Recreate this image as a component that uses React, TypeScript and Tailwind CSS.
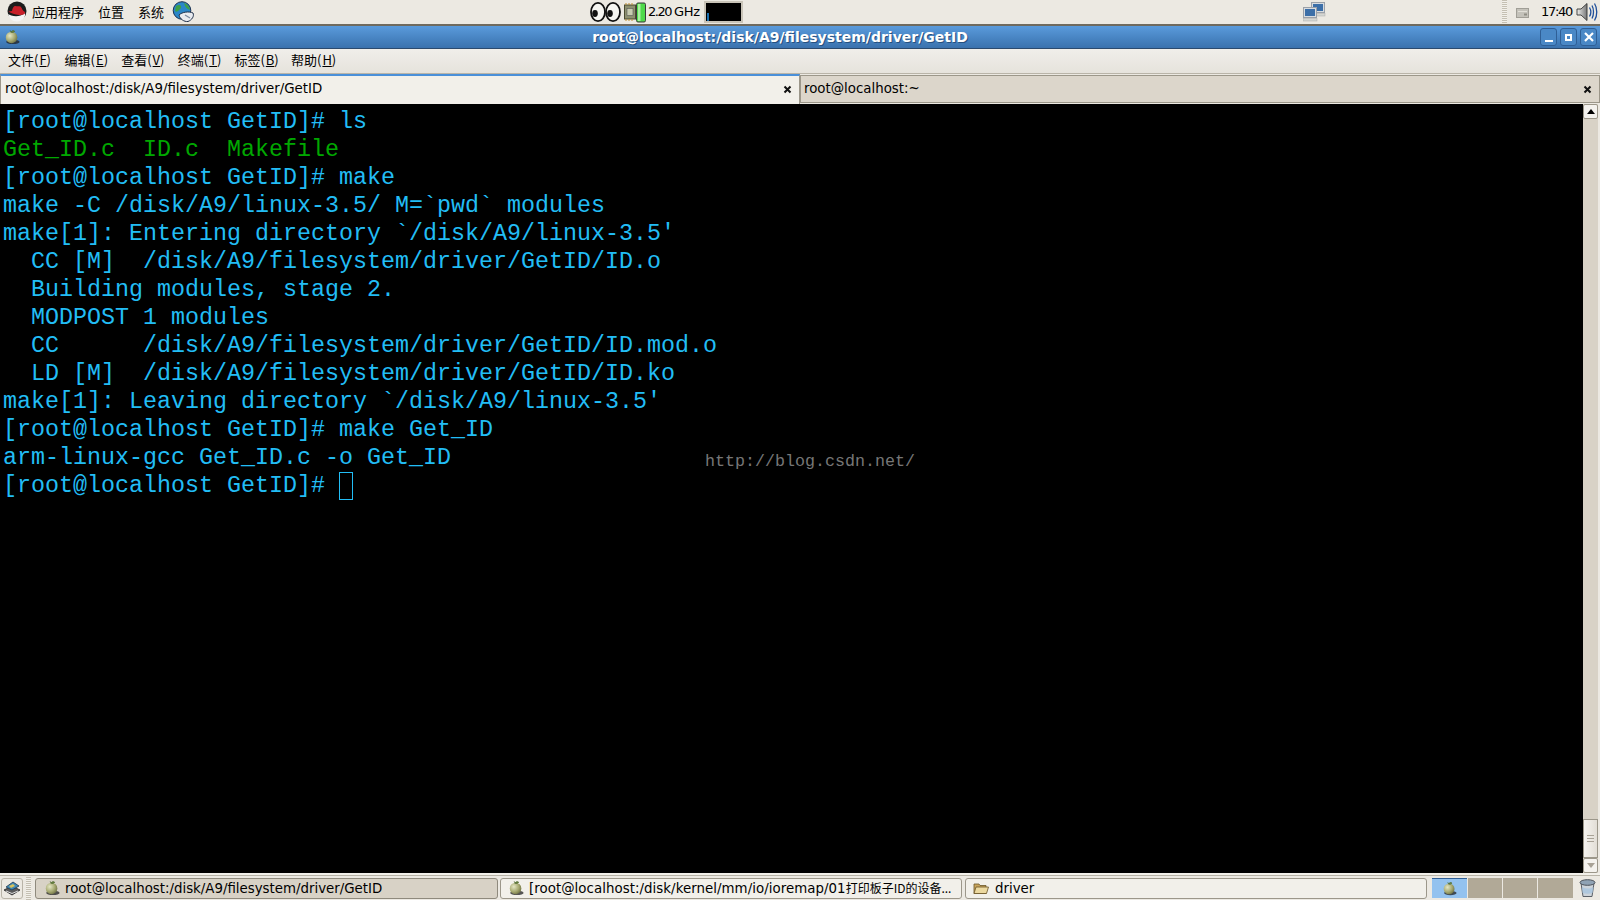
import React from "react";

const UI = '"DejaVu Sans","Noto Sans CJK SC",sans-serif';
const CJK = '"Noto Sans CJK SC","DejaVu Sans",sans-serif';

function Apple({ size = 18 }: { size?: number }) {
  return (
    <svg width={size} height={size} viewBox="0 0 18 18" className="shrink-0">
      <defs>
        <radialGradient id="ap" cx="0.35" cy="0.35" r="0.8">
          <stop offset="0" stopColor="#e4e6c4" />
          <stop offset="0.55" stopColor="#a5a870" />
          <stop offset="1" stopColor="#5f6238" />
        </radialGradient>
      </defs>
      <ellipse cx="10" cy="14.5" rx="7.5" ry="2.5" fill="#222" opacity="0.75" />
      <circle cx="8.5" cy="9.5" r="6.5" fill="url(#ap)" />
      <path d="M8 4 L7 1.5 M8 3.5 C9 1.5 11 1.5 12 2.5 C11 4 9.5 4 8 3.5" stroke="#4f6a30" strokeWidth="0.9" fill="#6f8a46" />
    </svg>
  );
}

function RedHat() {
  return (
    <svg width="20" height="22" viewBox="0 0 20 22">
      <circle cx="10" cy="10" r="9.5" fill="#1c1c1c" />
      <path d="M1 13 C4 15 12 17 18 12 C19 16 15 20.5 10 20.5 C5 20.5 2 17 1 13 Z" fill="#f4f4f4" />
      <path d="M1.5 10.5 L5 10 C5.5 7 6.5 5 8.5 5 C10 5.5 12 5 13.5 5.5 C15 7 15.5 10 18 11 C18.5 13 16 14.5 12 14 C8 13.5 4 12.5 1.5 10.5 Z" fill="#c8202a" />
    </svg>
  );
}

function GlobeMouse() {
  return (
    <svg width="23" height="22" viewBox="0 0 23 22">
      <circle cx="10" cy="9.5" r="8.8" fill="#2a86c8" stroke="#1a3050" strokeWidth="1" />
      <path d="M4 5 C7 3 10 4 9 7 C7 9 5 12 3 10 Z M12 2 C15 3 18 6 18 9 C15 8 13 6 12 2 Z" fill="#3fa048" />
      <path d="M7 14 C10 11 17 10 21 12 C22.5 15 20 19 16 20.5 C12 21 8 18 7 14 Z" fill="#e8ebf0" stroke="#20304a" strokeWidth="1" />
      <path d="M13 14 L18 17" stroke="#7a8aa0" strokeWidth="1.2" />
    </svg>
  );
}

function Eye() {
  return (
    <svg width="16" height="22" viewBox="0 0 16 22" className="-mr-px">
      <ellipse cx="8" cy="11" rx="7" ry="9.2" fill="#f6f6f2" stroke="#111" strokeWidth="1.8" />
      <ellipse cx="5" cy="12.5" rx="2.8" ry="3.4" fill="#111" />
    </svg>
  );
}

function Chip() {
  return (
    <svg width="12" height="22" viewBox="0 0 12 22">
      <rect x="0.5" y="4" width="11" height="14" fill="#8d9070" stroke="#4a4a30" />
      <rect x="3" y="7.5" width="6" height="7" fill="#c8ccb0" stroke="#555" strokeWidth="0.6" />
      <path d="M2 2v2M5 2v2M8 2v2M2 18v2M5 18v2M8 18v2" stroke="#c09030" strokeWidth="1" />
    </svg>
  );
}

function Battery() {
  return (
    <svg width="10" height="22" viewBox="0 0 10 22">
      <rect x="0.5" y="2" width="9" height="19" rx="1.5" fill="#4fd94a" stroke="#3a3a3a" />
      <rect x="2" y="3" width="2.5" height="17" fill="#a8f0a0" />
    </svg>
  );
}

function Network() {
  const Mon = ({ x, y }: { x: number; y: number }) => (
    <g transform={`translate(${x} ${y})`}>
      <rect x="0.5" y="0.5" width="13" height="10" fill="#d8dce0" stroke="#9aa0a8" />
      <rect x="2" y="2" width="10" height="7" fill="#3c6fa8" />
      <rect x="0" y="11.5" width="14" height="2.5" fill="#d4d6d2" stroke="#aaa" strokeWidth="0.5" />
    </g>
  );
  return (
    <svg width="23" height="21" viewBox="0 0 23 21">
      <Mon x={8} y={1} />
      <Mon x={0} y={6} />
    </svg>
  );
}

function Tray() {
  return (
    <svg width="13" height="11" viewBox="0 0 13 11">
      <rect x="0.5" y="1.5" width="12" height="9" fill="#c4c2ba" stroke="#a09e96" />
      <rect x="2" y="4" width="9" height="1" fill="#e2e0d8" />
      <rect x="8" y="6.5" width="3" height="2" fill="#8f8d84" />
    </svg>
  );
}

function Speaker() {
  return (
    <svg width="22" height="20" viewBox="0 0 22 20">
      <defs>
        <linearGradient id="sp" x1="0" x2="1">
          <stop offset="0" stopColor="#f0f0ee" />
          <stop offset="1" stopColor="#777" />
        </linearGradient>
      </defs>
      <path d="M1 7 H5 L11 1.5 V18.5 L5 13 H1 Z" fill="url(#sp)" stroke="#333" strokeWidth="0.9" />
      <path d="M13.5 5.5 C15 8 15 12 13.5 14.5 M16 3.5 C18 7 18 13 16 16.5 M18.5 1.5 C21.5 6 21.5 14 18.5 18.5" fill="none" stroke="#1f4f9a" strokeWidth="1.3" />
    </svg>
  );
}

function Folder() {
  return (
    <svg width="16" height="14" viewBox="0 0 16 14" className="shrink-0">
      <path d="M1 3 H6 L7 4.5 H13 V12.5 H1 Z" fill="#c9a55c" stroke="#6a5427" strokeWidth="0.8" />
      <path d="M3 6 H15.5 L13.5 12.5 H1 Z" fill="#ecd9a0" stroke="#6a5427" strokeWidth="0.8" />
    </svg>
  );
}

function ShowDesktop() {
  return (
    <svg width="18" height="16" viewBox="0 0 18 16">
      <path d="M1 10 L9 6 L17 10 L9 15 Z" fill="#5a5a5a" stroke="#222" strokeWidth="0.8" />
      <path d="M3 7 L10 2 L16 6 L9 10 Z" fill="#3f89b8" stroke="#20384f" strokeWidth="0.8" />
      <path d="M6 6 L10 4 L12 6 L8 8 Z" fill="#d8c35c" />
      <path d="M3 11 L9 13.5 L15 11" stroke="#eee" strokeWidth="0.9" fill="none" />
    </svg>
  );
}

function Trash() {
  return (
    <svg width="17" height="20" viewBox="0 0 17 20">
      <path d="M2 5 L4 18.5 H13 L15 5 Z" fill="#cdd4da" stroke="#5a6068" />
      <ellipse cx="8.5" cy="4.5" rx="7.5" ry="2.8" fill="#8fa2b4" stroke="#4a5058" />
      <path d="M3 9 C7 11 11 11 14.5 9 L13.5 15 C10 16 7 16 3.5 15 Z" fill="#a7c4de" opacity="0.8" />
    </svg>
  );
}

function Handle({ className = "" }: { className?: string }) {
  return (
    <div
      className={`w-[5px] bg-[repeating-linear-gradient(to_bottom,#c4bfb2_0,#c4bfb2_1px,#f2f0ea_1px,#f2f0ea_2px)] ${className}`}
    />
  );
}

function WinBtn({ children }: { children: React.ReactNode }) {
  return (
    <div className="flex h-[18px] w-[17px] items-center justify-center rounded-[3px] border border-[#2f5f96] bg-[#4a88c6]">
      {children}
    </div>
  );
}

function Menu({ label, k }: { label: string; k: string }) {
  return (
    <span className="w-[43px] whitespace-nowrap">
      {label}
      <span className="tracking-[1px]">(</span>
      <span className="underline">{k}</span>
      <span>)</span>
    </span>
  );
}

function CloseX() {
  return (
    <svg width="9" height="9" viewBox="0 0 9 9">
      <path d="M1.5 1.5 L7.5 7.5 M7.5 1.5 L1.5 7.5" stroke="#111" strokeWidth="2" />
    </svg>
  );
}

const C = "#22bdf5";
const G = "#00a800";
const lines: { t: string; c: string }[] = [
  { t: "[root@localhost GetID]# ls", c: C },
  { t: "Get_ID.c  ID.c  Makefile", c: G },
  { t: "[root@localhost GetID]# make", c: C },
  { t: "make -C /disk/A9/linux-3.5/ M=`pwd` modules", c: C },
  { t: "make[1]: Entering directory `/disk/A9/linux-3.5'", c: C },
  { t: "  CC [M]  /disk/A9/filesystem/driver/GetID/ID.o", c: C },
  { t: "  Building modules, stage 2.", c: C },
  { t: "  MODPOST 1 modules", c: C },
  { t: "  CC      /disk/A9/filesystem/driver/GetID/ID.mod.o", c: C },
  { t: "  LD [M]  /disk/A9/filesystem/driver/GetID/ID.ko", c: C },
  { t: "make[1]: Leaving directory `/disk/A9/linux-3.5'", c: C },
  { t: "[root@localhost GetID]# make Get_ID", c: C },
  { t: "arm-linux-gcc Get_ID.c -o Get_ID", c: C },
];

export default function App() {
  return (
    <div className="flex h-[900px] w-[1600px] flex-col overflow-hidden bg-[#ece9e2] text-black" style={{ fontFamily: UI }}>
      {/* Top panel */}
      <div className="relative flex h-[26px] shrink-0 items-center border-b-2 border-[#6f6a5e] bg-[#ece9e2]">
        <div className="flex items-center pl-[7px] text-[13px] leading-none" style={{ fontFamily: CJK }}>
          <RedHat />
          <span className="mb-[2px] ml-[5px]">应用程序</span>
          <span className="mb-[2px] ml-[14px]">位置</span>
          <span className="mb-[2px] ml-[14px]">系统</span>
          <span className="ml-[8px]"><GlobeMouse /></span>
        </div>
        <div className="absolute left-[590px] top-0 flex h-[24px] items-center">
          <Eye />
          <Eye />
          <span className="ml-[4px]"><Chip /></span>
          <Battery />
          <span className="ml-[2px] text-[13px] tracking-[-1.5px]">2.20</span>
          <span className="ml-[3px] text-[13px] tracking-[-0.3px]">GHz</span>
          <div className="ml-[4px] flex h-[22px] w-[39px] items-end border-2 border-[#c9c4b8] bg-black pl-[1px]">
            <div className="h-[8px] w-[2px] bg-[#1a6fb0]" />
          </div>
        </div>
        <div className="absolute left-[1303px] top-[1px]"><Network /></div>
        <div className="absolute left-[1502px] top-0 h-[23px]"><Handle className="h-full" /></div>
        <div className="absolute left-[1516px] top-[7px]"><Tray /></div>
        <span className="absolute left-[1541px] top-[4px] text-[13px] leading-[16px] tracking-[-1.3px]">17:40</span>
        <div className="absolute left-[1576px] top-[2px]"><Speaker /></div>
      </div>

      {/* Title bar */}
      <div className="relative flex h-[23px] shrink-0 items-center justify-center border-b border-[#2b4a6e] bg-gradient-to-b from-[#5a9bdc] to-[#3a72ae]">
        <div className="absolute left-[4px] top-[3px]"><Apple size={16} /></div>
        <span className="text-[14px] font-bold text-white [text-shadow:1px_1px_0_#26507f]" style={{ marginRight: 40 }}>
          root@localhost:/disk/A9/filesystem/driver/GetID
        </span>
        <div className="absolute right-[3px] top-[2px] flex gap-[3px]">
          <WinBtn><div className="mt-[8px] h-[2px] w-[8px] bg-white" /></WinBtn>
          <WinBtn><div className="h-[7px] w-[7px] border-2 border-white" /></WinBtn>
          <WinBtn>
            <svg width="10" height="10" viewBox="0 0 10 10"><path d="M1 1 L9 9 M9 1 L1 9" stroke="#fff" strokeWidth="2.2" /></svg>
          </WinBtn>
        </div>
      </div>

      {/* Menu bar */}
      <div className="flex h-[25px] shrink-0 items-center gap-[13.6px] border-b border-[#b9b4a8] bg-gradient-to-b from-[#f0eeea] to-[#e6e3dc] pb-[2px] pl-[8px] text-[13px]" style={{ fontFamily: CJK }}>
        <Menu label="文件" k="F" />
        <Menu label="编辑" k="E" />
        <Menu label="查看" k="V" />
        <Menu label="终端" k="T" />
        <Menu label="标签" k="B" />
        <Menu label="帮助" k="H" />
      </div>

      {/* Tabs */}
      <div className="flex h-[30px] shrink-0 bg-[#ece9e2] text-[13.35px]">
        <div className="flex h-full w-[800px] items-center justify-between border-x border-[#9c978a] border-t-2 border-t-[#4a90d9] bg-[#f2f0ea] pl-[4px] pr-[7px] pb-[2px]">
          <span>root@localhost:/disk/A9/filesystem/driver/GetID</span>
          <CloseX />
        </div>
        <div className="mt-px flex h-[28px] w-[800px] items-center justify-between border border-[#9c978a] bg-[#dcd6cb] pl-[3px] pr-[7px]">
          <span>root@localhost:~</span>
          <CloseX />
        </div>
      </div>

      {/* Terminal */}
      <div className="flex min-h-0 flex-1 border-b-2 border-[#f2f0ea] pr-[2px]">
        <div className="relative min-w-0 flex-1 overflow-hidden bg-black pl-[3px] pt-[4px] text-[23.33px] leading-[28px]" style={{ fontFamily: '"Liberation Mono",monospace' }}>
          {lines.map((l, i) => (
            <div key={i} className="h-[28px] whitespace-pre" style={{ color: l.c }}>
              {l.t}
            </div>
          ))}
          <div className="flex h-[28px] whitespace-pre text-[#22bdf5]">
            {"[root@localhost GetID]# "}
            <span className="inline-block h-[28px] w-[14px] border border-[#22bdf5]" />
          </div>
          <div className="absolute left-[705px] top-[346px] text-[16.67px] leading-[24px] text-[#767676]" style={{ fontFamily: '"Liberation Mono",monospace' }}>
            http://blog.csdn.net/
          </div>
        </div>
        <div className="flex w-[15px] shrink-0 flex-col bg-[#d8d2c6]">
          <div className="flex h-[15px] items-center justify-center rounded-[2px] border border-[#9c978a] bg-[#f4f2ee]">
            <div className="h-0 w-0 border-x-[4px] border-b-[5px] border-x-transparent border-b-black" />
          </div>
          <div className="flex-1" />
          <div className="flex h-[39px] flex-col items-center justify-center gap-[2px] border border-[#9c978a] bg-gradient-to-r from-[#f6f4f0] to-[#e2ded6]">
            <div className="h-px w-[7px] bg-[#a8a296]" />
            <div className="h-px w-[7px] bg-[#a8a296]" />
            <div className="h-px w-[7px] bg-[#a8a296]" />
          </div>
          <div className="flex h-[15px] items-center justify-center rounded-[2px] border border-[#9c978a] bg-[#f4f2ee]">
            <div className="h-0 w-0 border-x-[4px] border-t-[5px] border-x-transparent border-t-[#a8a296]" />
          </div>
        </div>
      </div>

      {/* Bottom panel */}
      <div className="flex h-[25px] shrink-0 items-center border-t border-[#b9b4a8] bg-[#ece9e2] pl-[1px] text-[13.35px]">
        <div className="flex h-[21px] w-[22px] shrink-0 items-center justify-center rounded-[3px] border border-[#b9b4a8] bg-[#ece9e2]">
          <ShowDesktop />
        </div>
        <Handle className="ml-[3px] h-[23px] shrink-0" />
        <div className="ml-[4px] flex h-[21px] w-[463px] shrink-0 items-center rounded-[3px] border border-[#8f8a7d] bg-[#d8d2c6] pl-[8px]">
          <Apple size={16} />
          <span className="ml-[5px] mt-[2px] whitespace-nowrap">root@localhost:/disk/A9/filesystem/driver/GetID</span>
        </div>
        <div className="ml-[2px] flex h-[21px] w-[462px] shrink-0 items-center overflow-hidden rounded-[3px] border border-[#9c978a] bg-[#f2f0ea] pl-[7px]">
          <Apple size={16} />
          <span className="ml-[5px] mt-[1px] whitespace-nowrap tracking-[0.05px]">
            [root@localhost:/disk/kernel/mm/io/ioremap/01
            <span className="text-[12px] tracking-normal" style={{ fontFamily: CJK }}>打印板子ID的设备...</span>
          </span>
        </div>
        <div className="ml-[3px] flex h-[21px] w-[462px] shrink-0 items-center rounded-[3px] border border-[#9c978a] bg-[#f2f0ea] pl-[7px]">
          <Folder />
          <span className="ml-[6px] mt-[1px]">driver</span>
        </div>
        <div className="ml-[5px] flex h-[20px] w-[35px] shrink-0 items-center justify-center border-t border-[#2f5f96] bg-[#93c2ef]">
          <Apple size={15} />
        </div>
        <div className="h-[20px] w-[35px] shrink-0 border-l border-[#ece9e2] bg-[#b1a997]" />
        <div className="h-[20px] w-[36px] shrink-0 border-x border-[#ece9e2] bg-[#b1a997]" />
        <div className="h-[20px] w-[35px] shrink-0 bg-[#b1a997]" />
        <div className="ml-[6px] shrink-0"><Trash /></div>
      </div>
    </div>
  );
}
